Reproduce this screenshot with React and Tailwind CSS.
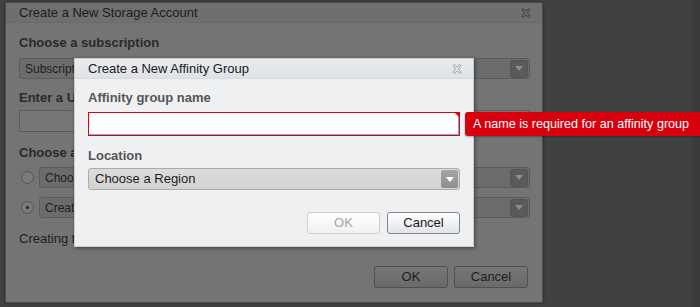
import React from "react";

const font = { fontFamily: '"Liberation Sans", Arial, sans-serif' };

function CloseIcon({ stroke, fill }) {
  return (
    <svg width="10" height="10" viewBox="0 0 10 10">
      <path
        d="M1 1.5 L2.5 0.5 L5 3 L7.5 0.5 L9 1.5 L6.5 5 L9 8.5 L7.5 9.5 L5 7 L2.5 9.5 L1 8.5 L3.5 5 Z"
        fill={fill}
        stroke={stroke}
        strokeWidth="0.9"
        strokeLinejoin="round"
      />
    </svg>
  );
}

function OuterSelect({ label, className = "" }) {
  return (
    <div className={`h-[21px] rounded-[3px] border border-[#5c5c5c] bg-[#6c6c6c] flex items-center justify-between pl-[5px] pr-[1px] ${className}`}>
      <span className="text-[12px] text-[#1e1e1e] whitespace-nowrap">{label}</span>
      <div className="w-[18px] h-[18px] rounded-[3px] bg-[#5a5a5a] border border-[#555] flex items-center justify-center">
        <svg width="8" height="5" viewBox="0 0 8 5"><path d="M0 0 H8 L4 5 Z" fill="#8c8c8c" /></svg>
      </div>
    </div>
  );
}

function Radio({ checked }) {
  return (
    <div className="w-[13px] h-[13px] rounded-full border border-[#555] bg-[#7a7a7a] flex items-center justify-center shrink-0">
      {checked && <div className="w-[3px] h-[3px] rounded-full bg-[#222]" />}
    </div>
  );
}

export default function App() {
  return (
    <div style={font} className="w-[700px] h-[307px] bg-[#414141] relative overflow-hidden flex">
      {/* Outer dialog (dimmed) */}
      <div className="ml-[5px] mt-[2px] w-[538px] h-[301px] border border-[#4b4b4b] rounded-[2px] bg-[#747474] flex flex-col shadow-[0_0_3px_rgba(0,0,0,0.4)]">
        <div className="h-[20px] bg-[#6e6f70] border-b border-[#696a6b] flex items-center justify-between pl-[13px] pr-[11px]">
          <span className="text-[13px] text-[#1c1c1c]">Create a New Storage Account</span>
          <CloseIcon stroke="#3c3c3c" fill="#6a6a6a" />
        </div>
        <div className="pl-[13px] pr-[12px] flex flex-col">
          <div className="mt-[12px] h-[16px] leading-[16px] text-[13px] font-bold text-[#2a2a2a]">Choose a subscription</div>
          <OuterSelect label="Subscription" className="mt-[7px]" />
          <div className="mt-[11px] h-[16px] leading-[16px] text-[13px] font-bold text-[#2a2a2a]">Enter a URL</div>
          <div className="mt-[4px] h-[22px] rounded-[2px] border border-[#5c5c5c] bg-[#777]" />
          <div className="mt-[13px] h-[16px] leading-[16px] text-[13px] font-bold text-[#2a2a2a]">Choose an affinity group</div>
          <div className="mt-[6px] flex items-center gap-[5px] pl-[2px]">
            <Radio />
            <OuterSelect label="Choose" className="flex-1" />
          </div>
          <div className="mt-[9px] flex items-center gap-[5px] pl-[2px]">
            <Radio checked />
            <OuterSelect label="Create a new affinity group" className="flex-1" />
          </div>
          <div className="mt-[13px] h-[16px] leading-[16px] text-[13px] text-[#1e1e1e]">Creating the storage account</div>
          <div className="mt-[19px] mr-[2px] flex justify-end gap-[6px]">
            <button className="w-[74px] h-[22px] rounded-[3px] border border-[#4f4f4f] bg-[linear-gradient(#767676,#6a6a6a)] text-[13px] text-[#1e1e1e]">OK</button>
            <button className="w-[74px] h-[22px] rounded-[3px] border border-[#4f4f4f] bg-[linear-gradient(#767676,#6a6a6a)] text-[13px] text-[#1e1e1e]">Cancel</button>
          </div>
        </div>
      </div>
      <div className="flex-1" />
      <div className="w-[8px] bg-[#3b3b3b]" />

      {/* Inner dialog */}
      <div className="absolute left-[74px] top-[58px] w-[400px] h-[189px] border border-[#c9ccd0] bg-[#eef0f2] flex flex-col shadow-[1px_1px_4px_rgba(0,0,0,0.45)]">
        <div className="h-[20px] bg-[linear-gradient(#e9ebed,#e0e3e6)] border-b border-[#d8dbde] flex items-center justify-between pl-[13px] pr-[11px]">
          <span className="text-[13px] text-[#202020]">Create a New Affinity Group</span>
          <CloseIcon stroke="#9a9a9a" fill="#e4e6e8" />
        </div>
        <div className="pl-[13px] pr-[13px] flex flex-col">
          <div className="mt-[11px] h-[16px] leading-[16px] text-[13px] font-bold text-[#555]">Affinity group name</div>
          <div className="mt-[6px] h-[24px] border border-[#e3000f] relative">
            <div className="h-full bg-white border-b border-r border-[#6fb3c9]" />
            <svg className="absolute -right-[1px] -top-[1px]" width="6" height="6" viewBox="0 0 6 6"><path d="M0 0 H6 V6 Z" fill="#e3000f" /></svg>
          </div>
          <div className="mt-[12px] h-[16px] leading-[16px] text-[13px] font-bold text-[#555]">Location</div>
          <div className="mt-[4px] h-[22px] rounded-[3px] border border-[#a9abad] bg-[linear-gradient(#dcdcdc,#d2d2d2)] flex items-center justify-between pl-[6px] pr-[1px]">
            <span className="text-[13px] text-[#1e1e1e]">Choose a Region</span>
            <div className="w-[17px] h-[18px] rounded-[2px] bg-[linear-gradient(#a4a4a4,#8e8e8e)] flex items-center justify-center">
              <svg width="8" height="5" viewBox="0 0 8 5"><path d="M0 0 H8 L4 5 Z" fill="#fff" /></svg>
            </div>
          </div>
          <div className="mt-[22px] flex justify-end gap-[7px]">
            <button className="w-[73px] h-[22px] rounded-[3px] border border-[#cdcfd1] bg-[linear-gradient(#ffffff,#f1f1f1)] text-[13px] text-[#a5a5a5]">OK</button>
            <button className="w-[73px] h-[22px] rounded-[3px] border border-[#7b8690] bg-[linear-gradient(#ffffff,#e3e4e6)] text-[13px] text-[#1b1b1b]">Cancel</button>
          </div>
        </div>
      </div>

      {/* Tooltip */}
      <div className="absolute left-[465px] top-[112px] w-[240px] h-[24px] rounded-[3px] bg-[#d9000d] flex items-center pl-[8px] shadow-[0_1px_2px_rgba(0,0,0,0.3)]">
        <span className="text-[12.6px] text-white whitespace-nowrap">A name is required for an affinity group</span>
      </div>
    </div>
  );
}
